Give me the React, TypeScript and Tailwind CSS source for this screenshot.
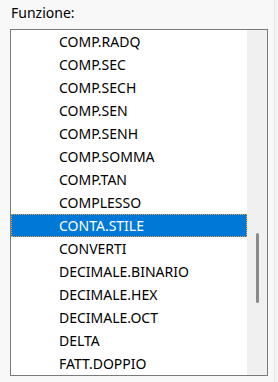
const functionList = [
  'COMP.RADQ',
  'COMP.SEC',
  'COMP.SECH',
  'COMP.SEN',
  'COMP.SENH',
  'COMP.SOMMA',
  'COMP.TAN',
  'COMPLESSO',
  'CONTA.STILE',
  'CONVERTI',
  'DECIMALE.BINARIO',
  'DECIMALE.HEX',
  'DECIMALE.OCT',
  'DELTA',
  'FATT.DOPPIO',
];

export default function App() {
  const selected = 'CONTA.STILE';

  return (
    <div
      className="flex h-[382px] w-[278px] overflow-hidden bg-[#f8f8f8] text-[14px] text-black"
      style={{ fontFamily: '"Noto Sans", "Open Sans", sans-serif' }}
    >
      <div className="flex w-[274px] flex-col pl-[10px] pr-[6px]">
        <label className="mt-[3px] h-[26px] pl-px leading-[20px]">Funzione:</label>

        {/* list box */}
        <div className="flex h-[347px] border border-[#7a7a7a] bg-white">
          <ul className="flex-1 overflow-hidden">
            {functionList.map((name) => (
              <li
                key={name}
                className={
                  name === selected
                    ? 'h-[23px] border border-dotted border-[#f0a040] bg-[#0078d7] pl-[47px] leading-[21px] text-white'
                    : 'h-[23px] pl-[48px] leading-[23px]'
                }
              >
                {name}
              </li>
            ))}
          </ul>

          {/* scrollbar */}
          <div className="flex w-[20px] justify-center bg-[#f0f0f0] pt-[203px] pl-px">
            <div className="h-[70px] w-[3px] rounded-full bg-[#8a8a8a]" />
          </div>
        </div>
      </div>
      <div className="w-px bg-[#e3e3e3]" />
      <div className="flex-1 bg-[#f4f4f4]" />
    </div>
  );
}
